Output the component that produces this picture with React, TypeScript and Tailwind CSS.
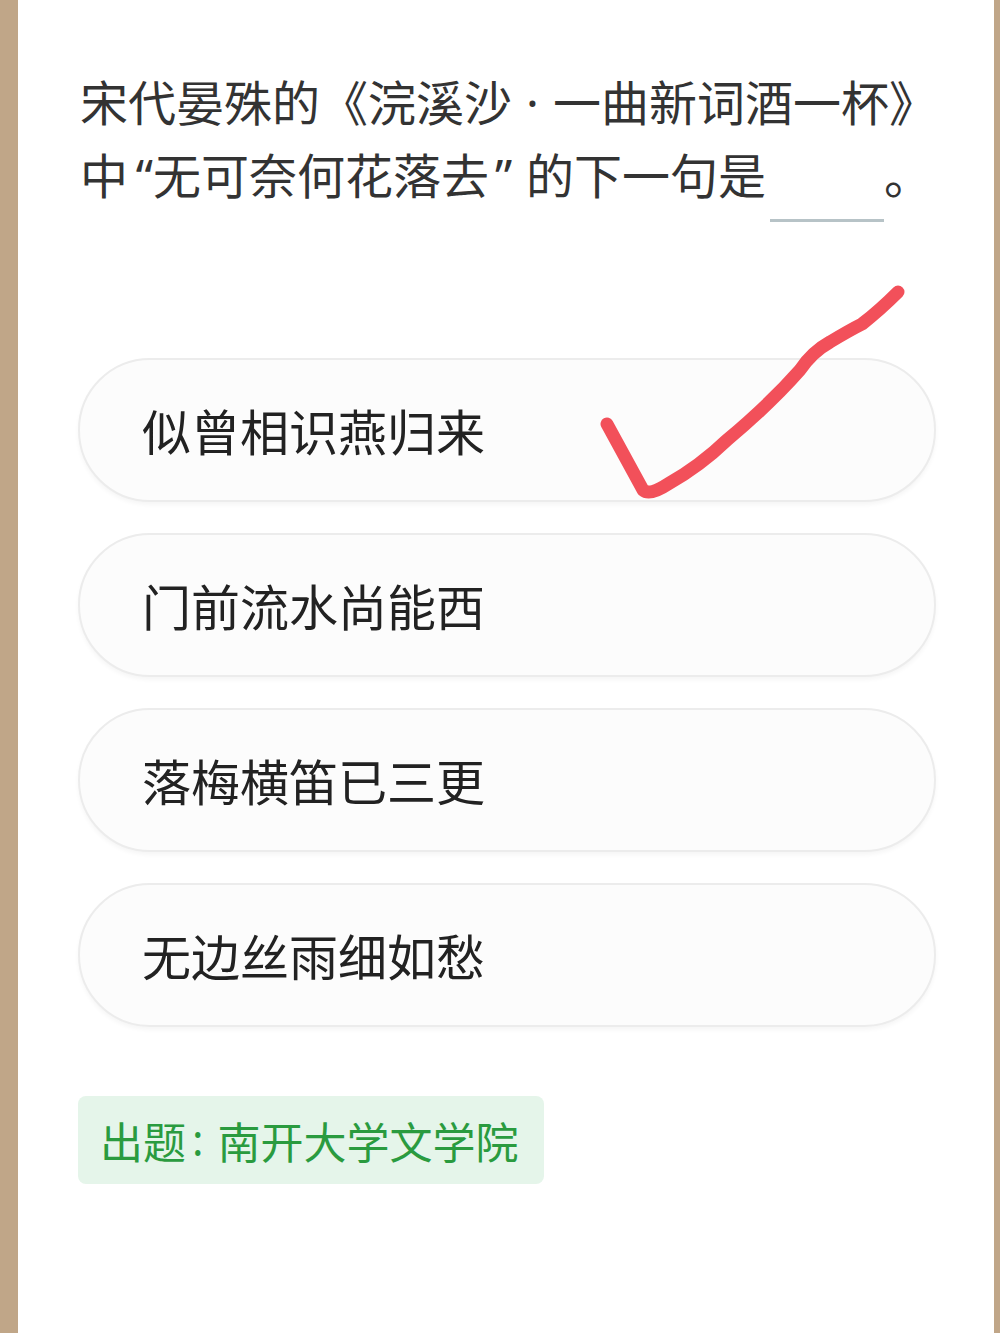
const options = ['似曾相识燕归来', '门前流水尚能西', '落梅横笛已三更', '无边丝雨细如愁'];

function Check() {
  return (
    <svg className="pointer-events-none absolute left-0 top-0" width="1000" height="600" viewBox="0 0 1000 600">
      <path
        d="M607 424 L643 490 Q650 496 668 484 Q700 466 727 440 Q770 404 800 370 Q812 352 830 342 Q850 330 862 324 Q880 310 898 292"
        fill="none"
        stroke="#f2505a"
        strokeWidth="13"
        strokeLinecap="round"
        strokeLinejoin="round"
      />
    </svg>
  );
}

export default function App() {
  return (
    <div
      className="relative flex h-[1333px] w-[1000px] bg-[#c0a688]"
      style={{ fontFamily: '"Noto Sans CJK SC", "Noto Sans", sans-serif' }}
    >
      <div className="ml-[18px] mr-[6px] flex flex-1 flex-col bg-white pl-[60px] pr-[30px] pt-[65px]">
        <div className="ml-[2px] whitespace-nowrap text-[48px] leading-[70px] text-[#333]">
          <div>
            宋代晏殊的《浣溪沙
            <span className="mx-[14px] font-['Noto_Sans']">·</span>
            一曲新词酒一杯》
          </div>
          <div>
            中
            <span className="inline-block w-[25px] text-right font-['Noto_Sans']">“</span>
            无可奈何花落去
            <span className="inline-block w-[37px] pl-[6px] font-['Noto_Sans']">”</span>
            的下一句是
            <span className="relative inline-block w-[118px]">
              <span className="absolute bottom-[-14px] left-[4px] h-[3px] w-[114px] bg-[#b7c3c7]" />
              &nbsp;
            </span>
            。
          </div>
        </div>

        <div className="mr-[28px] mt-[147px] flex flex-col gap-[31px]">
          {options.map((o) => (
            <div
              key={o}
              className="flex h-[144px] items-center rounded-full border-2 border-[#ececec] bg-[#fcfcfc] pl-[62px] text-[49px] text-[#222] shadow-[0_3px_4px_rgba(0,0,0,0.04)]"
            >
              {o}
            </div>
          ))}
        </div>

        <div className="mt-[69px] flex h-[88px] w-[466px] items-center rounded-lg bg-[#e5f5ea] px-[22px] text-[43px] text-[#2a9b3f]">
          出题
          <span className="ml-[6px] mr-[14px] font-['Noto_Sans']">:</span>
          南开大学文学院
        </div>
      </div>
      <Check />
    </div>
  );
}
